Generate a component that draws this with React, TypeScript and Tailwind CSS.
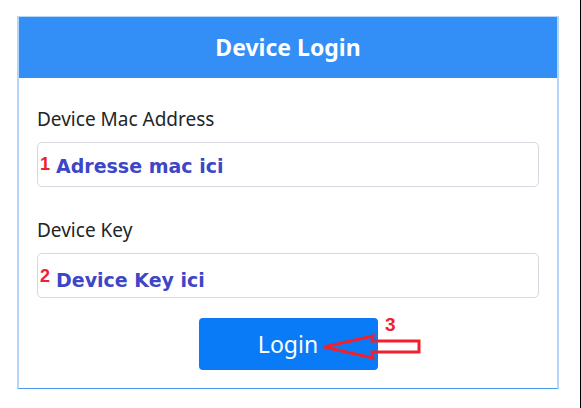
import React from "react"

export default function App() {
  return (
    <div className="min-h-screen w-full bg-white border-r border-black pt-[16px] pl-[17px] font-['Noto_Sans',sans-serif]">
      <div className="w-[542px] border-x-2 border-t border-[#b5d5f9] border-b border-b-[#4a9af0]">
        {/* Header */}
        <div className="h-[61px] bg-[#338ef5] flex items-center justify-center">
          <h1 className="text-white text-[23px] font-bold leading-none">Device Login</h1>
        </div>

        {/* Form */}
        <div className="px-[18px] pt-[28px] pb-[18px] flex flex-col">
          <label className="text-[19px] leading-[27px] text-[#212529]">Device Mac Address</label>
          <div className="relative mt-[9px] h-[45px] rounded-[5px] border border-[#d5d9e0] bg-white">
            <span className="absolute left-[2px] top-[12px] text-[#f0212f] text-[18px] font-bold font-['Liberation_Sans',sans-serif] leading-none">1</span>
            <span className="absolute left-[18px] top-[14px] text-[#3d46c6] text-[19px] font-bold font-['DejaVu_Sans',sans-serif] leading-none">Adresse mac ici</span>
          </div>

          <label className="mt-[30px] text-[19px] leading-[27px] text-[#212529]">Device Key</label>
          <div className="relative mt-[9px] h-[45px] rounded-[5px] border border-[#d5d9e0] bg-white">
            <span className="absolute left-[2px] top-[13px] text-[#f0212f] text-[18px] font-bold font-['Liberation_Sans',sans-serif] leading-none">2</span>
            <span className="absolute left-[18px] top-[17px] text-[#3d46c6] text-[19px] font-bold font-['DejaVu_Sans',sans-serif] leading-none">Device Key ici</span>
          </div>

          <div className="relative mt-[20px] flex justify-center">
            <button className="w-[179px] h-[52px] rounded-[4px] bg-[#0a7bf6] text-white text-[23px] leading-none">
              Login
            </button>
            <span className="absolute left-[348px] top-[-3px] text-[#f0212f] text-[19px] font-bold font-['Liberation_Sans',sans-serif] leading-none">3</span>
            <svg className="absolute left-[285px] top-[16px]" width="100" height="26" viewBox="0 0 100 26">
              <path
                d="M2 13 L51 2 L50 7 L97 7 L97 18 L50 18 L51 24 Z"
                fill="none"
                stroke="#f0212f"
                strokeWidth="3"
                strokeLinejoin="miter"
              />
            </svg>
          </div>
        </div>
      </div>
    </div>
  )
}
